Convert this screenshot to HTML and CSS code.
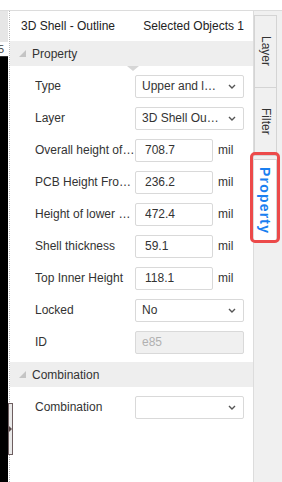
FILE: index.html
```html
<!DOCTYPE html>
<html>
<head>
<meta charset="utf-8">
<link rel="stylesheet" href="styles.css">
</head>
<body>
<div class="app">
  <div class="cols">
    <div class="gutter">
      <div class="g-gray"></div>
      <div class="g-ruler"><span class="g-num">5</span></div>
    </div>
    <div class="splitter">
      <div class="handle">
        <svg width="4" height="8" viewBox="0 0 4 8"><polygon points="0,0 4,4 0,8" fill="#5a4a4a"/></svg>
      </div>
    </div>
    <div class="panel">
      <div class="p-head">
        <span>3D Shell - Outline</span>
        <span>Selected Objects 1</span>
      </div>
      <div class="section">
        <svg class="tri" width="7" height="7" viewBox="0 0 7 7"><polygon points="7,0 7,7 0,7" fill="#c4c4c4"/></svg>
        <span>Property</span>
      </div>
      <div class="caret"></div>
      <div class="rows">
        <div class="row">
          <span class="label">Type</span>
          <div class="select"><span class="val">Upper and lower shell</span><svg class="chev" width="8" height="5" viewBox="0 0 8 5"><polyline points="1,1 4,4 7,1" fill="none" stroke="#555" stroke-width="1.4"/></svg></div>
        </div>
        <div class="row">
          <span class="label">Layer</span>
          <div class="select"><span class="val">3D Shell Outline</span><svg class="chev" width="8" height="5" viewBox="0 0 8 5"><polyline points="1,1 4,4 7,1" fill="none" stroke="#555" stroke-width="1.4"/></svg></div>
        </div>
        <div class="row">
          <span class="label">Overall height of shell</span>
          <div class="input"><span class="val">708.7</span></div>
          <span class="unit">mil</span>
        </div>
        <div class="row">
          <span class="label">PCB Height From Bottom</span>
          <div class="input"><span class="val">236.2</span></div>
          <span class="unit">mil</span>
        </div>
        <div class="row">
          <span class="label">Height of lower shell</span>
          <div class="input"><span class="val">472.4</span></div>
          <span class="unit">mil</span>
        </div>
        <div class="row">
          <span class="label">Shell thickness</span>
          <div class="input"><span class="val">59.1</span></div>
          <span class="unit">mil</span>
        </div>
        <div class="row">
          <span class="label">Top Inner Height</span>
          <div class="input"><span class="val">118.1</span></div>
          <span class="unit">mil</span>
        </div>
        <div class="row">
          <span class="label">Locked</span>
          <div class="select"><span class="val">No</span><svg class="chev" width="8" height="5" viewBox="0 0 8 5"><polyline points="1,1 4,4 7,1" fill="none" stroke="#555" stroke-width="1.4"/></svg></div>
        </div>
        <div class="row">
          <span class="label">ID</span>
          <div class="select disabled"><span class="val">e85</span></div>
        </div>
      </div>
      <div class="section">
        <svg class="tri" width="7" height="7" viewBox="0 0 7 7"><polygon points="7,0 7,7 0,7" fill="#c4c4c4"/></svg>
        <span>Combination</span>
      </div>
      <div class="rows">
        <div class="row">
          <span class="label">Combination</span>
          <div class="select"><span class="val"></span><svg class="chev" width="8" height="5" viewBox="0 0 8 5"><polyline points="1,1 4,4 7,1" fill="none" stroke="#555" stroke-width="1.4"/></svg></div>
        </div>
      </div>
    </div>
    <div class="tabs">
      <div class="tab layer">Layer</div>
      <div class="tab filter">Filter</div>
      <div class="tab active">Property</div>
      <div class="highlight"></div>
    </div>
  </div>
</div>
</body>
</html>
```
FILE: styles.css
```css
* { box-sizing: border-box; margin: 0; padding: 0; }
html, body { width: 282px; height: 482px; overflow: hidden; background: #fff; }
body {
  font-family: "Liberation Sans", Arial, sans-serif;
  font-size: 12px;
  color: #333;
}
.app { height: 482px; padding-top: 10px; background: #fff; }
.cols {
  display: flex;
  height: 472px;
  border-top: 1px solid #dcdcdc;
}
.gutter {
  width: 8px;
  flex: none;
  background: #000;
}
.g-gray { height: 31px; background: #e6e6e6; }
.g-ruler {
  height: 15px;
  background: #fff;
  border-bottom: 1px solid #333;
  overflow: hidden;
}
.g-num { display: block; font-size: 11px; line-height: 11px; margin-left: -2px; margin-top: 2px; color: #444; }
.splitter {
  width: 2px;
  flex: none;
  position: relative;
  background-color: #fff;
  background-image: linear-gradient(#b8b8b8 50%, transparent 50%);
  background-size: 1px 2px;
  background-repeat: repeat-y;
  background-position: 1px 0;
}
.handle {
  position: absolute;
  left: 0;
  top: 392px;
  width: 5px;
  height: 52px;
  border: 1px solid #6e5e60;
  background: #e9e9e9;
  display: flex;
  align-items: center;
  justify-content: flex-end;
  z-index: 2;
}
.panel {
  width: 243px;
  flex: none;
  position: relative;
  display: flex;
  flex-direction: column;
  background: #fff;
}
.p-head {
  height: 30px;
  flex: none;
  display: flex;
  align-items: center;
  justify-content: space-between;
  padding: 0 9px 0 11px;
  color: #222;
}
.section {
  height: 25px;
  flex: none;
  background: #eeeeee;
  display: flex;
  align-items: center;
  padding-left: 9px;
  gap: 6px;
  color: #333;
}
.tri { display: block; }
.caret {
  position: absolute;
  left: 117px;
  top: 55px;
  width: 0; height: 0;
  border-left: 6px solid transparent;
  border-right: 6px solid transparent;
  border-top: 5px solid #d6d6d6;
}
.rows { padding-top: 4px; flex: none; display: flex; flex-direction: column; }
.rows + .section { margin-top: 4px; }
.row {
  height: 32px;
  display: flex;
  align-items: center;
  padding-left: 25px;
}
.label {
  width: 100px;
  flex: none;
  white-space: nowrap;
  overflow: hidden;
  text-overflow: ellipsis;
  color: #333;
}
.select, .input {
  height: 23px;
  flex: none;
  border: 1px solid #d9d9d9;
  border-radius: 2px;
  background: #fff;
  display: flex;
  align-items: center;
}
.select { width: 109px; padding: 0 7px 0 6px; }
.input { width: 78px; padding: 0 6px 0 9px; }
.val {
  flex: 1;
  min-width: 0;
  white-space: nowrap;
  overflow: hidden;
  text-overflow: ellipsis;
  color: #333;
}
.chev { display: block; margin-left: 8px; flex: none; }
.select.disabled { background: #f0f0f0; }
.select.disabled .val { color: #b0b0b0; }
.unit { margin-left: 5px; color: #333; }
.tabs {
  flex: 1;
  background: #f0f0f0;
  border-left: 1px solid #dcdcdc;
  padding-top: 4px;
  position: relative;
  display: flex;
  flex-direction: column;
}
.tab {
  width: 23px;
  flex: none;
  writing-mode: vertical-rl;
  display: flex;
  align-items: center;
  justify-content: center;
  border: 1px solid #d4d4d4;
  background: #f0f0f0;
  color: #333;
}
.tab.layer { height: 73px; }
.tab.filter { height: 68px; border-top: none; }
.tab.active {
  height: 84px;
  margin-top: 3px;
  background: #fff;
  border-left: none;
  color: #1a7ff0;
  font-weight: bold;
  font-size: 14px;
  letter-spacing: 1.2px;
}
.highlight {
  position: absolute;
  left: -4px;
  top: 141px;
  width: 30px;
  height: 91px;
  border: 3px solid #ec4a4a;
  border-radius: 5px;
}
```
